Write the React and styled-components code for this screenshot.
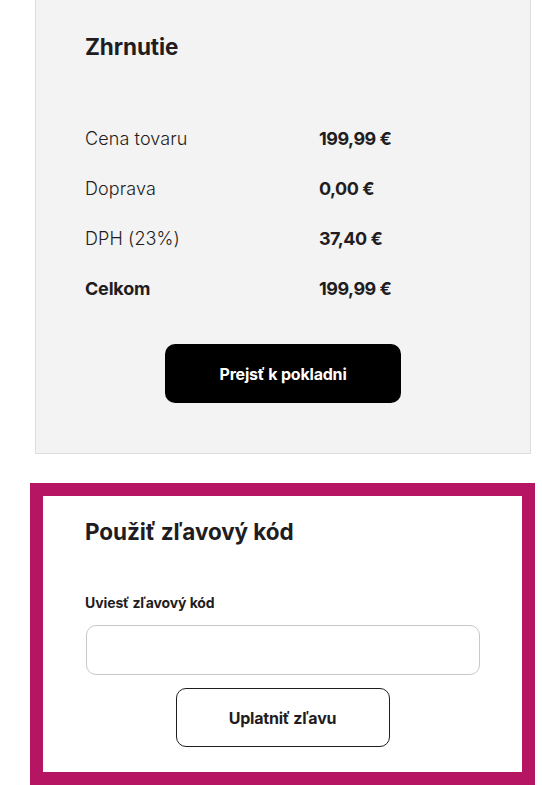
import React from "react";
import styled, { createGlobalStyle } from "styled-components";

const Global = createGlobalStyle`
  html, body { margin: 0; padding: 0; background: #ffffff; }
  body { font-family: Inter, "Noto Sans", Arial, sans-serif; color: #1f1d21; }
  * { box-sizing: border-box; }
`;

const Page = styled.div`
  width: 542px;
  display: flex;
  flex-direction: column;
  padding-bottom: 1px;
`;

const SummaryCard = styled.section`
  margin-left: 35px;
  width: 496px;
  background: #f3f3f3;
  border: 1px solid #dddddd;
  border-top: none;
  padding: 33px 49px 50px 49px;
  display: flex;
  flex-direction: column;
`;

const Heading = styled.h2`
  margin: 0;
  font-size: 22.5px;
  line-height: 28px;
  font-weight: 700;
  color: #1f1d21;
  letter-spacing: -0.1px;
`;

const Rows = styled.div`
  margin-top: 53px;
  display: flex;
  flex-direction: column;
`;

const Row = styled.div`
  display: grid;
  grid-template-columns: 234px 1fr;
  height: 50px;
  align-items: center;
  font-size: 18px;
  line-height: 22px;
`;

const Label = styled.span`
  font-weight: ${(p) => (p.$strong ? 700 : 300)};
  color: #1f1d21;
  letter-spacing: ${(p) => (p.$strong ? "-0.2px" : "0.1px")};
`;

const Value = styled.span`
  font-weight: 700;
  color: #1f1d21;
  letter-spacing: -0.5px;
`;

const PrimaryButton = styled.button`
  align-self: center;
  margin-top: 30px;
  width: 236px;
  height: 59px;
  border: none;
  border-radius: 10px;
  background: #000000;
  color: #ffffff;
  font-family: inherit;
  font-size: 16px;
  font-weight: 700;
  letter-spacing: -0.2px;
  cursor: pointer;
`;

const DiscountBox = styled.section`
  margin-top: 29px;
  margin-left: 30px;
  width: 505px;
  border: 13px solid #b51562;
  background: #ffffff;
  padding: 22px 42px 25px 42px;
  display: flex;
  flex-direction: column;
`;

const FieldLabel = styled.label`
  margin-top: 47px;
  font-size: 14px;
  line-height: 20px;
  font-weight: 700;
  color: #1f1d21;
  letter-spacing: -0.1px;
`;

const Input = styled.input`
  margin-top: 12px;
  margin-left: 1px;
  width: 394px;
  height: 50px;
  border: 1px solid #c8c8c8;
  border-radius: 10px;
  background: #ffffff;
  padding: 0 14px;
  font-family: inherit;
  font-size: 16px;
  outline: none;
`;

const SecondaryButton = styled.button`
  align-self: center;
  margin-top: 13px;
  width: 214px;
  height: 59px;
  border: 1px solid #1f1d21;
  border-radius: 10px;
  background: #ffffff;
  color: #1f1d21;
  font-family: inherit;
  font-size: 16px;
  font-weight: 700;
  letter-spacing: -0.2px;
  cursor: pointer;
`;

const rows = [
  { label: "Cena tovaru", value: "199,99 €" },
  { label: "Doprava", value: "0,00 €" },
  { label: "DPH (23%)", value: "37,40 €" },
  { label: "Celkom", value: "199,99 €", strong: true },
];

export default function App() {
  return (
    <>
      <Global />
      <Page>
        <SummaryCard>
          <Heading>Zhrnutie</Heading>
          <Rows>
            {rows.map((r) => (
              <Row key={r.label}>
                <Label $strong={r.strong}>{r.label}</Label>
                <Value>{r.value}</Value>
              </Row>
            ))}
          </Rows>
          <PrimaryButton>Prejsť k pokladni</PrimaryButton>
        </SummaryCard>
        <DiscountBox>
          <Heading>Použiť zľavový kód</Heading>
          <FieldLabel htmlFor="code">Uviesť zľavový kód</FieldLabel>
          <Input id="code" type="text" />
          <SecondaryButton>Uplatniť zľavu</SecondaryButton>
        </DiscountBox>
      </Page>
    </>
  );
}
